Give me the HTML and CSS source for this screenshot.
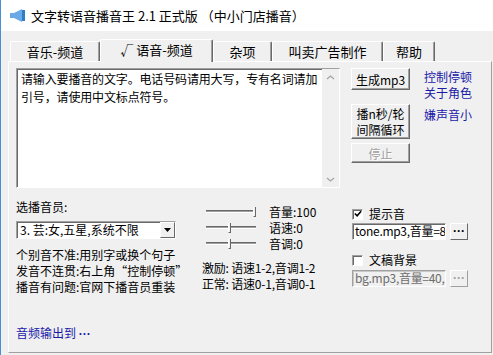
FILE: index.html
```html
<!DOCTYPE html>
<html>
<head>
  <meta charset="UTF-8">
  <title>文字转语音播音王</title>
  <link rel="stylesheet" href="styles.css">
</head>
<body>
  <div class="window">
    <div class="titlebar">
      <svg class="app-icon" viewBox="0 0 15 13" xmlns="http://www.w3.org/2000/svg">
        <polygon points="0,4 4,4 12,0 12,13 4,9 0,9" fill="#6aa9e6"/>
        <rect x="12" y="1" width="3" height="11" fill="#2f7cc9"/>
      </svg>
      <span class="title">文字转语音播音王 2.1 正式版 （中小门店播音）</span>
    </div>

    <div class="client">
      <div class="tabs">
        <div class="tab tab-1">音乐-频道</div>
        <div class="tab tab-2 selected">√ 语音-频道</div>
        <div class="tab tab-3">杂项</div>
        <div class="tab tab-4">叫卖广告制作</div>
        <div class="tab tab-5">帮助</div>
      </div>

      <div class="page">
        <div class="top-row">
          <div class="memo">
            <div class="memo-text">请输入要播音的文字。电话号码请用大写，专有名词请加引号，请使用中文标点符号。</div>
            <div class="scrollbar">
              <svg class="chevron" viewBox="0 0 9 5"><polyline points="1,4 4.5,1 8,4" fill="none" stroke="#a3a3a3" stroke-width="1.2"/></svg>
              <svg class="chevron" viewBox="0 0 9 5"><polyline points="1,1 4.5,4 8,1" fill="none" stroke="#a3a3a3" stroke-width="1.2"/></svg>
            </div>
          </div>

          <div class="btn-col">
            <div class="btn btn-make">生成mp3</div>
            <div class="btn btn-loop">播n秒/轮<br>间隔循环</div>
            <div class="btn btn-stop disabled">停止</div>
          </div>

          <div class="link-col">
            <div class="link">控制停顿</div>
            <div class="link">关于角色</div>
            <div class="link link-gap">嫌声音小</div>
          </div>
        </div>

        <div class="bottom-row">
          <div class="col-voice">
            <div class="label">选播音员:</div>
            <div class="select">
              <span class="select-text">3. 芸:女,五星,系统不限</span>
              <span class="select-btn">
                <svg viewBox="0 0 7 4"><polygon points="0,0 7,0 3.5,4" fill="#000"/></svg>
              </span>
            </div>
            <div class="notes">
              <div>个别音不准:用别字或换个句子</div>
              <div>发音不连贯:右上角“控制停顿”</div>
              <div>播音有问题:官网下播音员重装</div>
            </div>
          </div>

          <div class="col-sliders">
            <div class="slider-row">
              <div class="slider"><span class="thumb" style="left: 100%"></span></div>
              <span class="slider-label">音量:100</span>
            </div>
            <div class="slider-row">
              <div class="slider"><span class="thumb" style="left: 50%"></span></div>
              <span class="slider-label">语速:0</span>
            </div>
            <div class="slider-row">
              <div class="slider"><span class="thumb" style="left: 50%"></span></div>
              <span class="slider-label">音调:0</span>
            </div>
            <div class="hints">
              <div>激励: 语速1-2,音调1-2</div>
              <div>正常: 语速0-1,音调0-1</div>
            </div>
          </div>

          <div class="col-sounds">
            <div class="check-row">
              <span class="checkbox">
                <svg viewBox="0 0 9 9"><polyline points="1,4 3.5,6.5 8,1.5" fill="none" stroke="#000" stroke-width="1.8"/></svg>
              </span>
              <span>提示音</span>
            </div>
            <div class="file-row">
              <div class="field">tone.mp3,音量=8</div>
              <div class="dots">···</div>
            </div>
            <div class="check-row check-gap">
              <span class="checkbox"></span>
              <span>文稿背景</span>
            </div>
            <div class="file-row file-gap">
              <div class="field disabled">bg.mp3,音量=40,</div>
              <div class="dots disabled">···</div>
            </div>
          </div>
        </div>

        <div class="output-link">音频输出到 <span class="more">···</span></div>
      </div>
    </div>
  </div>
</body>
</html>
```

FILE: styles.css
```css
* {
  box-sizing: border-box;
}
body {
  margin: 0;
  font-family: 'Noto Sans CJK SC', 'Microsoft YaHei', sans-serif;
  font-size: 12px;
  color: #000;
  background-color: #f0f0f0;
}
.window {
  width: 493px;
  height: 355px;
  border-left: 1px solid #4a8fd4;
  background-color: #f0f0f0;
  display: flex;
  flex-direction: column;
}
.titlebar {
  height: 31px;
  flex: none;
  background-color: #fff;
  display: flex;
  align-items: center;
  gap: 6px;
  padding-left: 9px;
}
.app-icon {
  width: 15px;
  height: 13px;
}
.title {
  font-size: 13px;
}
.client {
  flex: 1;
  display: flex;
  flex-direction: column;
  padding: 8px 1px 2px 7px;
}

/* tabs */
.tabs {
  display: flex;
  align-items: flex-end;
  height: 22px;
  padding-left: 2px;
  position: relative;
  z-index: 1;
}
.tab {
  height: 20px;
  line-height: 19px;
  font-size: 13px;
  text-align: center;
  background-color: #f0f0f0;
  border-top: 1px solid #fff;
  border-left: 1px solid #fff;
  border-right: 1px solid #696969;
  box-shadow: inset -1px 0 0 #a0a0a0;
  border-radius: 2px 2px 0 0;
}
.tab-1 { width: 90px; }
.tab-2 { width: 113px; }
.tab-3 { width: 59px; }
.tab-4 { width: 111px; }
.tab-5 { width: 52px; }
.tab.selected {
  height: 23px;
  line-height: 20px;
  margin-bottom: -1px;
  padding-bottom: 2px;
}
.page {
  flex: 1;
  display: flex;
  flex-direction: column;
  padding: 6px 0 10px 7px;
  border: 1px solid;
  border-color: #fff #a0a0a0 #a0a0a0 #fff;
}

/* top area */
.top-row {
  display: flex;
  align-items: flex-start;
}
.memo {
  width: 324px;
  height: 120px;
  display: flex;
  background-color: #fff;
  border: 1px solid;
  border-color: #a0a0a0 #fff #fff #a0a0a0;
  box-shadow: inset 1px 1px 0 #696969;
}
.memo-text {
  flex: 1;
  padding: 1px 0 0 4px;
  line-height: 18px;
  letter-spacing: -0.15px;
}
.scrollbar {
  width: 17px;
  flex: none;
  background-color: #f0f0f0;
  display: flex;
  flex-direction: column;
  justify-content: space-between;
  align-items: center;
  padding: 6px 0 5px;
}
.chevron {
  width: 9px;
  height: 5px;
}
.btn-col {
  width: 59px;
  margin-left: 11px;
  display: flex;
  flex-direction: column;
}
.btn {
  display: flex;
  align-items: center;
  justify-content: center;
  text-align: center;
  background-color: #f0f0f0;
  border: 1px solid;
  border-color: #fff #696969 #696969 #fff;
  box-shadow: inset -1px -1px 0 #a0a0a0;
}
.btn-make {
  height: 22px;
}
.btn-loop {
  height: 35px;
  margin-top: 14px;
  line-height: 16px;
}
.btn-stop {
  height: 20px;
  margin-top: 4px;
}
.btn.disabled {
  color: #a0a0a0;
  text-shadow: 1px 1px 0 #fff;
}
.link-col {
  margin-left: 14px;
  padding-top: 1px;
  line-height: 16px;
}
.link,
.output-link {
  color: #1a1aa8;
}
.link-gap {
  margin-top: 6px;
}

/* bottom area */
.bottom-row {
  display: grid;
  grid-template-columns: 186px 150px 1fr;
  margin-top: 11px;
  line-height: 16px;
}
.select {
  width: 160px;
  height: 18px;
  margin-top: 6px;
  display: flex;
  background-color: #fff;
  border: 1px solid;
  border-color: #a0a0a0 #fff #fff #a0a0a0;
  box-shadow: inset 1px 1px 0 #696969;
}
.select-text {
  flex: 1;
  padding-left: 3px;
  line-height: 15px;
  white-space: nowrap;
  overflow: hidden;
}
.select-btn {
  width: 15px;
  display: flex;
  align-items: center;
  justify-content: center;
  background-color: #f0f0f0;
  border: 1px solid;
  border-color: #fff #696969 #696969 #fff;
}
.select-btn svg {
  width: 7px;
  height: 4px;
}
.notes {
  margin-top: 8px;
}
.col-sliders {
  padding-top: 5px;
}
.slider-row {
  display: flex;
  align-items: center;
  height: 16px;
}
.slider {
  position: relative;
  width: 50px;
  height: 2px;
  margin-left: 4px;
  border-top: 1px solid #a0a0a0;
  border-bottom: 1px solid #fff;
  box-shadow: 0 -1px 0 #696969;
}
.thumb {
  position: absolute;
  top: -5px;
  width: 3px;
  height: 10px;
  margin-left: -3px;
  background-color: #f0f0f0;
  border-left: 1px solid #fff;
  border-right: 1px solid #696969;
  border-bottom: 1px solid #696969;
}
.slider-label {
  margin-left: 13px;
}
.hints {
  margin-top: 8px;
  line-height: 16px;
  letter-spacing: -0.2px;
}
.check-row {
  display: flex;
  align-items: center;
  gap: 6px;
  margin-top: 7px;
}
.check-gap {
  margin-top: 12px;
}
.checkbox {
  width: 11px;
  height: 11px;
  display: flex;
  align-items: center;
  justify-content: center;
  background-color: #fff;
  border: 1px solid;
  border-color: #a0a0a0 #fff #fff #a0a0a0;
  box-shadow: inset 1px 1px 0 #696969;
}
.checkbox svg {
  width: 8px;
  height: 8px;
}
.file-row {
  display: flex;
  align-items: center;
  gap: 4px;
  margin-top: 1px;
}
.file-gap {
  margin-top: 2px;
}
.field {
  width: 94px;
  height: 17px;
  padding-left: 2px;
  line-height: 14px;
  letter-spacing: -0.3px;
  white-space: nowrap;
  overflow: hidden;
  background-color: #fff;
  border: 1px solid;
  border-color: #a0a0a0 #fff #fff #a0a0a0;
  box-shadow: inset 1px 1px 0 #696969;
}
.field.disabled {
  color: #6d6d6d;
  background-color: #f0f0f0;
  box-shadow: inset 1px 1px 0 #c8c8c8;
}
.dots {
  width: 18px;
  height: 17px;
  line-height: 14px;
  font-family: 'Liberation Sans', sans-serif;
  font-weight: bold;
  text-align: center;
  background-color: #f0f0f0;
  border: 1px solid;
  border-color: #fff #696969 #696969 #fff;
}
.dots.disabled {
  color: #a0a0a0;
  border-color: #fff #a0a0a0 #a0a0a0 #fff;
}
.output-link {
  margin-top: auto;
  line-height: 16px;
}
.more {
  font-family: 'Liberation Sans', sans-serif;
  font-weight: bold;
}
```
